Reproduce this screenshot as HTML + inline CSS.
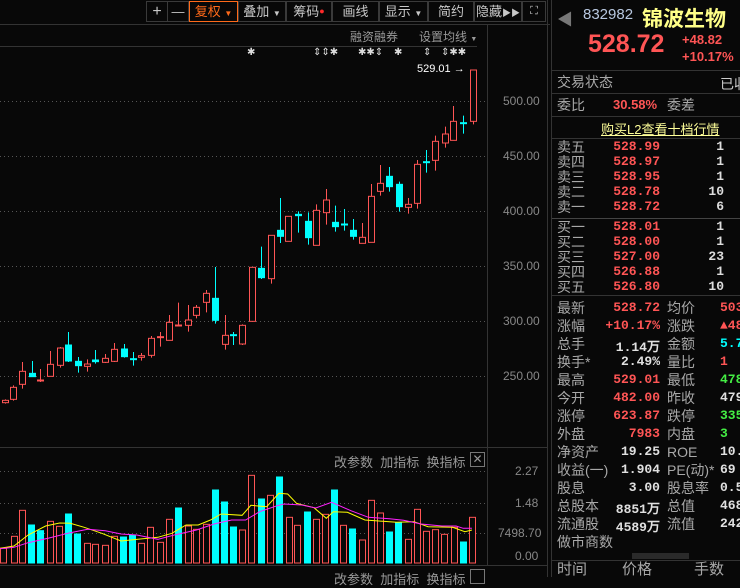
<!DOCTYPE html>
<html><head><meta charset="utf-8"><style>
*{margin:0;padding:0;box-sizing:border-box}
body{width:740px;height:577px;background:#080808;overflow:hidden;position:relative;font-family:"Liberation Sans","Noto Sans CJK SC",sans-serif;color:#b0b0b0}
.a{position:absolute;white-space:nowrap}
.btn{position:absolute;top:1px;height:21px;border:1px solid #3a3a3a;font-size:13px;color:#c8c8c8;text-align:center;line-height:19px}
.hl{position:absolute;height:1px;background:#333}
.r{color:#ff5555}.c{color:#00ffff}.g{color:#44ee44}.w{color:#e0e0e0}
.row{position:absolute;left:557px;font-size:14px;line-height:16px;color:#a8a8a8}
.mono{font-family:"Liberation Mono","DejaVu Sans Mono",monospace;font-weight:bold}
</style></head><body>
<!-- toolbar -->
<div class="btn" style="left:146px;width:22px;font-size:16px">+</div>
<div class="btn" style="left:167px;width:22px">—</div>
<div class="btn" style="left:189px;width:49px;border-color:#ff6a1a;color:#ff6a1a">复权 <span style="font-size:8px">▼</span></div>
<div class="btn" style="left:238px;width:48px">叠加 <span style="font-size:8px">▼</span></div>
<div class="btn" style="left:286px;width:46px">筹码<span style="color:#ff2a2a;font-size:9px;vertical-align:top">●</span></div>
<div class="btn" style="left:332px;width:47px">画线</div>
<div class="btn" style="left:379px;width:49px">显示 <span style="font-size:8px">▼</span></div>
<div class="btn" style="left:428px;width:46px">简约</div>
<div class="btn" style="left:474px;width:48px">隐藏<span style="font-size:9px">▶▶</span></div>
<div class="btn" style="left:522px;width:24px;font-size:11px">⛶</div>
<div class="hl" style="left:0;top:24px;width:550px"></div>
<div class="a" style="left:350px;top:28px;font-size:12px;color:#999">融资融券</div>
<div class="a" style="left:419px;top:28px;font-size:12px;color:#999">设置均线 <span style="font-size:7px">▼</span></div>
<div class="hl" style="left:0;top:46px;width:477px"></div>
<div class="a" style="top:47px;font-size:10px;color:#ddd;left:247px">✱</div>
<div class="a" style="top:47px;font-size:10px;color:#ddd;left:313px">⇕⇕✱</div>
<div class="a" style="top:47px;font-size:10px;color:#ddd;left:358px">✱✱⇕</div>
<div class="a" style="top:47px;font-size:10px;color:#ddd;left:394px">✱</div>
<div class="a" style="top:47px;font-size:10px;color:#ddd;left:423px">⇕</div>
<div class="a" style="top:47px;font-size:10px;color:#ddd;left:441px">⇕✱✱</div>
<div class="a" style="left:417px;top:63px;font-size:11px;color:#fff">529.01 →</div>
<div class="a" style="left:487px;top:24px;width:1px;height:541px;background:#333"></div>
<div class="a" style="left:547px;top:0;width:1px;height:577px;background:#333"></div>
<div class="a" style="left:551px;top:0;width:1px;height:577px;background:#333"></div>
<!-- axis labels -->
<div class="a" style="left:503px;top:94px;font-size:12px;color:#888">500.00</div>
<div class="a" style="left:503px;top:149px;font-size:12px;color:#888">450.00</div>
<div class="a" style="left:503px;top:204px;font-size:12px;color:#888">400.00</div>
<div class="a" style="left:503px;top:259px;font-size:12px;color:#888">350.00</div>
<div class="a" style="left:503px;top:314px;font-size:12px;color:#888">300.00</div>
<div class="a" style="left:503px;top:369px;font-size:12px;color:#888">250.00</div>
<div class="hl" style="left:0;top:447px;width:547px"></div>
<div class="a" style="left:334px;top:452px;font-size:13px;color:#999">改参数 &nbsp;加指标 &nbsp;换指标</div>
<div class="a" style="left:470px;top:452px;width:15px;height:15px;border:1px solid #777;color:#999;font-size:12px;line-height:13px;text-align:center">✕</div>
<div class="a" style="left:515px;top:464px;font-size:12px;color:#888">2.27</div>
<div class="a" style="left:515px;top:496px;font-size:12px;color:#888">1.48</div>
<div class="a" style="left:498px;top:526px;font-size:12px;color:#888">7498.70</div>
<div class="a" style="left:515px;top:549px;font-size:12px;color:#888">0.00</div>
<div class="hl" style="left:0;top:565px;width:547px"></div>
<div class="a" style="left:334px;top:569px;font-size:13px;color:#999">改参数 &nbsp;加指标 &nbsp;换指标</div>
<div class="a" style="left:470px;top:569px;width:15px;height:15px;border:1px solid #777"></div>
<svg class="a" style="left:0;top:0" width="547" height="577" id="sv"></svg>
<!-- right panel -->
<div class="a" style="left:557px;top:6px;font-size:16px;color:#777">◀</div>
<div class="a" style="left:583px;top:6px;font-size:15px;color:#b8c8e0">832982</div>
<div class="a" style="left:642px;top:3px;font-size:21px;font-weight:bold;color:#ffff88">锦波生物</div>
<div class="a r" style="left:588px;top:30px;font-size:25px;font-weight:bold">528.72</div>
<div class="a r" style="left:682px;top:32px;font-size:13px;font-weight:bold">+48.82</div>
<div class="a r" style="left:682px;top:49px;font-size:13px;font-weight:bold">+10.17%</div>
<div class="hl" style="left:552px;top:70px;width:188px"></div>
<div class="row" style="top:74px">交易状态</div><div class="a" style="left:720px;top:74px;font-size:14px;color:#ccc">已收</div>
<div class="hl" style="left:552px;top:93px;width:188px"></div>
<div class="row" style="top:97px">委比</div><div class="a r" style="left:613px;top:97px;font-size:13px;font-weight:bold">30.58%</div><div class="row" style="left:667px;top:97px">委差</div>
<div class="hl" style="left:552px;top:116px;width:188px"></div>
<div class="a" style="left:601px;top:119px;font-size:13px;color:#ffff99;text-decoration:underline">购买L2查看十档行情</div>
<div class="hl" style="left:552px;top:138px;width:188px"></div>
<div id="ob"></div>
<div class="hl" style="left:552px;top:218px;width:188px;background:#444"></div>
<div class="hl" style="left:552px;top:295px;width:188px"></div>
<div id="st"></div>
<div class="a" style="left:632px;top:553px;width:57px;height:6px;background:#2a2a2a"></div>
<div class="hl" style="left:552px;top:560px;width:188px"></div>
<div class="row" style="top:562px;font-size:15px">时间</div>
<div class="row" style="left:622px;top:562px;font-size:15px">价格</div>
<div class="row" style="left:694px;top:562px;font-size:15px">手数</div>
<script>
var ob=[["卖五","528.99","1",147],["卖四","528.97","1",162],["卖三","528.95","1",177],["卖二","528.78","10",192],["卖一","528.72","6",207],["买一","528.01","1",227],["买二","528.00","1",242],["买三","527.00","23",257],["买四","526.88","1",272],["买五","526.80","10",287]];
var h="";ob.forEach(function(o){h+='<div class="row" style="top:'+(o[3]-8)+'px">'+o[0]+'</div><div class="a r mono" style="left:600px;width:60px;text-align:right;top:'+(o[3]-8)+'px;font-size:13px">'+o[1]+'</div><div class="a mono" style="left:680px;width:44px;text-align:right;top:'+(o[3]-8)+'px;font-size:13px;color:#ddd">'+o[2]+'</div>';});
document.getElementById("ob").innerHTML=h;
var st=[["最新","528.72","r","均价","503","r"],["涨幅","+10.17%","r","涨跌","▲48","r"],["总手","1.14万","w","金额","5.7","c"],["换手*","2.49%","w","量比","1","r"],["最高","529.01","r","最低","478","g"],["今开","482.00","r","昨收","479","w"],["涨停","623.87","r","跌停","335","g"],["外盘","7983","r","内盘","3","g"],["净资产","19.25","w","ROE","10.4","w"],["收益(一)","1.904","w","PE(动)*","69","w"],["股息","3.00","w","股息率","0.5","w"],["总股本","8851万","w","总值","468.","w"],["流通股","4589万","w","流值","242.","w"],["做市商数","","w","",""," w"]];
h="";st.forEach(function(s,i){var y=300+i*18;h+='<div class="row" style="top:'+y+'px">'+s[0]+'</div><div class="a mono '+s[2]+'" style="left:590px;width:70px;text-align:right;top:'+y+'px;font-size:13px">'+s[1]+'</div><div class="row" style="left:667px;top:'+y+'px">'+s[3]+'</div><div class="a mono '+s[5]+'" style="left:720px;top:'+y+'px;font-size:13px">'+s[4]+'</div>';});
document.getElementById("st").innerHTML=h;
var NS="http://www.w3.org/2000/svg",sv=document.getElementById("sv"),R="#ff5555",C="#00ffff";
function el(t,a){var e=document.createElementNS(NS,t);for(var k in a)e.setAttribute(k,a[k]);sv.appendChild(e);return e;}
[101,156,211,266,321,376,471,503,533].forEach(function(y){el("line",{x1:0,x2:487,y1:y+.5,y2:y+.5,stroke:"#555","stroke-dasharray":"1,3"});});
var sx=1/2.85;
var cd=[[13,961,968,958,971,0],[38,922,958,916,962,0],[63,874,913,846,926,0],[90,880,890,843,890,1],[115,900,903,867,906,0],[143,853,889,813,889,0],[170,804,856,801,863,0],[195,795,843,756,846,1],[221,844,857,831,878,1],[247,852,859,838,875,0],[272,840,845,810,851,1],[300,835,847,822,849,0],[326,808,844,789,846,0],[352,807,830,792,833,1],[378,836,838,816,857,1],[403,827,832,819,842,0],[429,775,826,768,833,0],[457,770,773,756,800,0],[483,727,781,705,781,0],[508,735,737,668,737,0],[535,720,736,675,755,0],[560,682,706,675,715,0],[588,640,667,630,697,0],[614,655,721,561,731,1],[640,766,793,705,809,0],[665,764,766,756,795,1],[690,736,792,733,795,0],[717,562,724,562,724,0],[745,565,593,500,597,1],[771,466,596,466,611,0],[797,451,469,354,489,1],[822,409,484,409,484,0],[848,403,407,394,458,1],[877,424,473,397,494,1],[901,391,496,373,496,0],[928,360,398,327,434,0],[954,427,440,377,455,1],[979,432,434,387,452,1],[1005,451,469,417,479,1],[1032,472,490,429,490,0],[1058,349,487,312,487,0],[1084,310,334,255,347,0],[1109,289,320,261,335,1],[1136,313,380,305,395,1],[1162,373,382,354,401,0],[1189,253,370,240,386,0],[1215,245,247,210,278,1],[1241,184,241,167,272,0],[1267,162,189,140,203,0],[1292,124,181,78,181,0],[1320,128,130,107,161,1],[1347,-30,124,-30,133,0]];
cd.forEach(function(c){var x=Math.round(c[0]*sx)+.5,col=c[5]?C:R,t=c[1]/3+80,b=c[2]/3+80;
el("line",{x1:x,x2:x,y1:c[3]/3+80,y2:c[4]/3+80,stroke:col});
var hgt=Math.max(b-t,1);
el("rect",{x:x-3,y:t,width:6,height:hgt,fill:c[5]?C:"#080808",stroke:col});});
var vb=[[0,325,0],[30,289,0],[55,211,0],[80,255,1],[106,272,1],[135,244,0],[161,259,0],[185,222,1],[211,282,1],[238,310,0],[263,313,0],[291,316,0],[317,289,0],[342,291,1],[368,285,1],[394,310,0],[420,262,0],[448,307,0],[474,238,0],[499,204,1],[526,258,0],[551,268,0],[579,253,0],[604,150,1],[630,186,1],[656,261,1],[682,270,0],[708,106,0],[736,177,1],[762,166,0],[787,111,1],[814,232,0],[839,256,0],[867,216,1],[892,238,0],[918,223,0],[944,150,1],[970,256,0],[995,267,1],[1023,300,0],[1050,181,0],[1075,219,0],[1100,276,1],[1126,248,1],[1153,298,0],[1181,208,0],[1206,274,0],[1232,269,0],[1258,283,0],[1284,262,0],[1310,306,1],[1338,232,0]];
vb.forEach(function(v){var x=Math.round(v[0]*sx)+.5,t=v[1]/3+440;
el("rect",{x:x,y:t,width:6,height:563-t,fill:v[2]?C:"#080808",stroke:v[2]?C:R});});
function pl(p,col){el("polyline",{points:p.map(function(q){return (q[0]*sx).toFixed(1)+","+(q[1]/3+440).toFixed(1)}).join(" "),fill:"none",stroke:col,"stroke-width":1});}
pl([[0,325],[40,318],[80,285],[130,258],[170,249],[200,250],[240,262],[290,280],[345,303],[400,297],[450,292],[490,280],[530,255],[565,255],[600,240],[630,222],[690,226],[715,196],[760,200],[795,160],[820,162],[845,190],[895,203],[930,235],[950,215],[990,217],[1040,240],[1080,243],[1130,247],[1180,245],[1220,260],[1290,262],[1325,275],[1345,270]],"#ffff00");
pl([[0,326],[40,322],[80,308],[140,294],[200,278],[250,268],[300,272],[345,282],[390,285],[450,298],[500,284],[560,270],[610,252],[660,240],[700,240],[740,215],[790,197],[810,192],[860,195],[900,204],[945,187],[1000,212],[1050,232],[1110,236],[1150,241],[1200,252],[1260,258],[1300,258],[1320,265],[1345,265]],"#ff22ff");
</script>
</body></html>
